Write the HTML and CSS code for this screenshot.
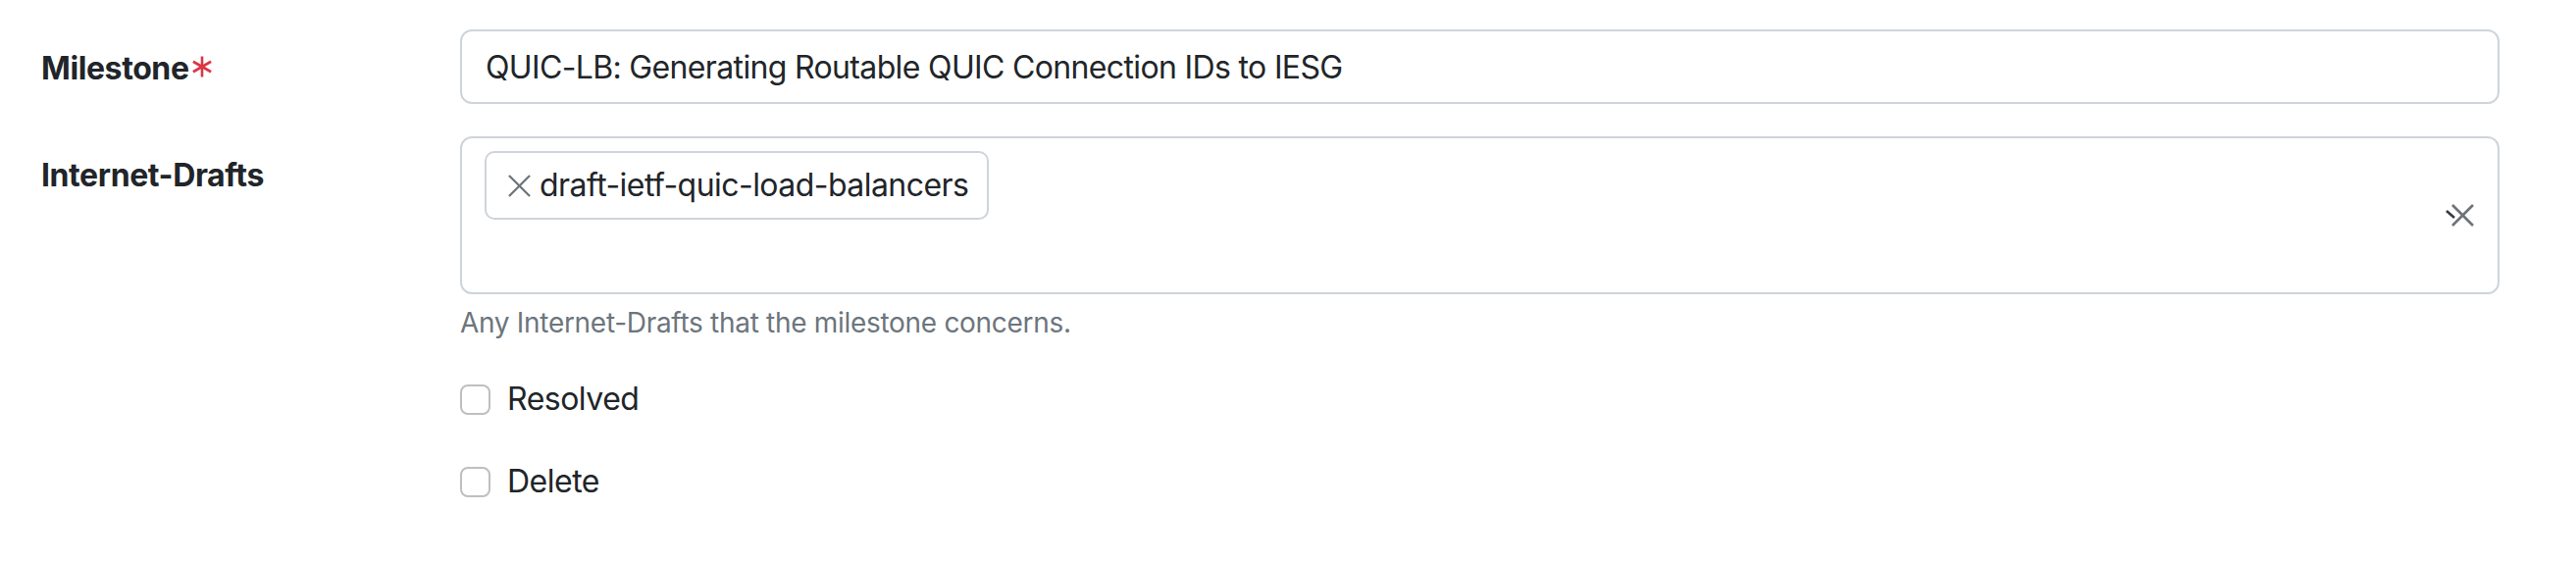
FILE: index.html
```html
<!DOCTYPE html>
<html lang="en">
<head>
<meta charset="utf-8">
<title>Milestone</title>
<link rel="stylesheet" href="styles.css">
</head>
<body>
<form class="form">
  <div class="row row-first">
    <label class="row-label" for="milestone">Milestone<svg class="req" viewBox="0 0 22 22" aria-hidden="true"><g stroke="#dc3545" stroke-width="2.6" stroke-linecap="butt"><line x1="11" y1="0.5" x2="11" y2="21.5"/><line x1="1.9" y1="5.75" x2="20.1" y2="16.25"/><line x1="1.9" y1="16.25" x2="20.1" y2="5.75"/></g></svg></label>
    <div class="field">
      <input id="milestone" class="text-input" type="text" value="QUIC-LB: Generating Routable QUIC Connection IDs to IESG">
    </div>
  </div>
  <div class="row row-drafts">
    <label class="row-label">Internet-Drafts</label>
    <div class="field">
      <div class="multi">
        <div class="items">
          <span class="tag"><svg class="tag-x" viewBox="0 0 24 24" aria-hidden="true"><g stroke="#6c757d" stroke-width="2.4"><line x1="1" y1="1" x2="23" y2="23"/><line x1="23" y1="1" x2="1" y2="23"/></g></svg>draft-ietf-quic-load-balancers</span>
        </div>
        <svg class="clear" viewBox="0 0 30 26" aria-hidden="true"><g stroke-width="2.6"><line x1="8" y1="2" x2="29" y2="23" stroke="#6f7379"/><line x1="29" y1="2" x2="8" y2="23" stroke="#6f7379"/><line x1="2" y1="8" x2="10" y2="15" stroke="#343a40"/></g></svg>
      </div>
      <div class="help">Any Internet-Drafts that the milestone concerns.</div>
    </div>
  </div>
  <div class="row row-check">
    <div class="spacer"></div>
    <div class="field">
      <label class="check"><input type="checkbox" class="check-input">Resolved</label>
    </div>
  </div>
  <div class="row row-check">
    <div class="spacer"></div>
    <div class="field">
      <label class="check"><input type="checkbox" class="check-input">Delete</label>
    </div>
  </div>
</form>
</body>
</html>
```

FILE: styles.css
```css
* { box-sizing: border-box; }

html, body {
  margin: 0;
  background: #ffffff;
}

body {
  font-family: Inter, "Liberation Sans", sans-serif;
  font-size: 32px;
  line-height: 1.5;
  color: #212529;
}

.form {
  padding: 30px 78px 0 42px;
}

.row {
  display: grid;
  grid-template-columns: 427px 1fr;
}

.row-first { margin-bottom: 33px; }
.row-drafts { margin-bottom: 33px; }
.row-check { margin-bottom: 36px; }

.row-label {
  font-weight: 700;
  line-height: 48px;
  padding-top: 16px;
  display: flex;
  align-items: center;
  align-self: start;
  letter-spacing: -0.4px;
}

.req {
  width: 22px;
  height: 22px;
  margin-left: 2px;
  margin-top: -4px;
}

.text-input {
  display: block;
  width: 100%;
  height: 76px;
  padding: 0 24px;
  font: inherit;
  color: #212529;
  border: 2px solid #ced4da;
  border-radius: 12px;
  background: #fff;
  outline: none;
  letter-spacing: -0.65px;
}

.multi {
  height: 161px;
  border: 2px solid #ced4da;
  border-radius: 12px;
  padding: 13px 24px 0 23px;
  display: flex;
  align-items: flex-start;
  justify-content: space-between;
}

.items {
  display: flex;
  flex-wrap: wrap;
}

.tag {
  display: inline-flex;
  align-items: center;
  height: 70px;
  padding: 0 19px 0 22px;
  border: 2px solid #ced4da;
  border-radius: 10px;
  letter-spacing: -0.55px;
  line-height: 1;
}

.tag-x {
  width: 23px;
  height: 23px;
  margin-right: 9px;
}

.clear {
  width: 30px;
  height: 26px;
  align-self: center;
  margin-top: -12px;
}

.help {
  margin-top: 8px;
  font-size: 28px;
  line-height: 42px;
  color: #6c757d;
  letter-spacing: -0.3px;
}

.check {
  display: flex;
  align-items: center;
  min-height: 48px;
  letter-spacing: -0.5px;
}

.check-input {
  appearance: none;
  -webkit-appearance: none;
  width: 31px;
  height: 31px;
  margin: 0 17px 0 0;
  border: 2px solid #bfbfbf;
  border-radius: 8px;
  background: #fff;
  flex: none;
}
```
